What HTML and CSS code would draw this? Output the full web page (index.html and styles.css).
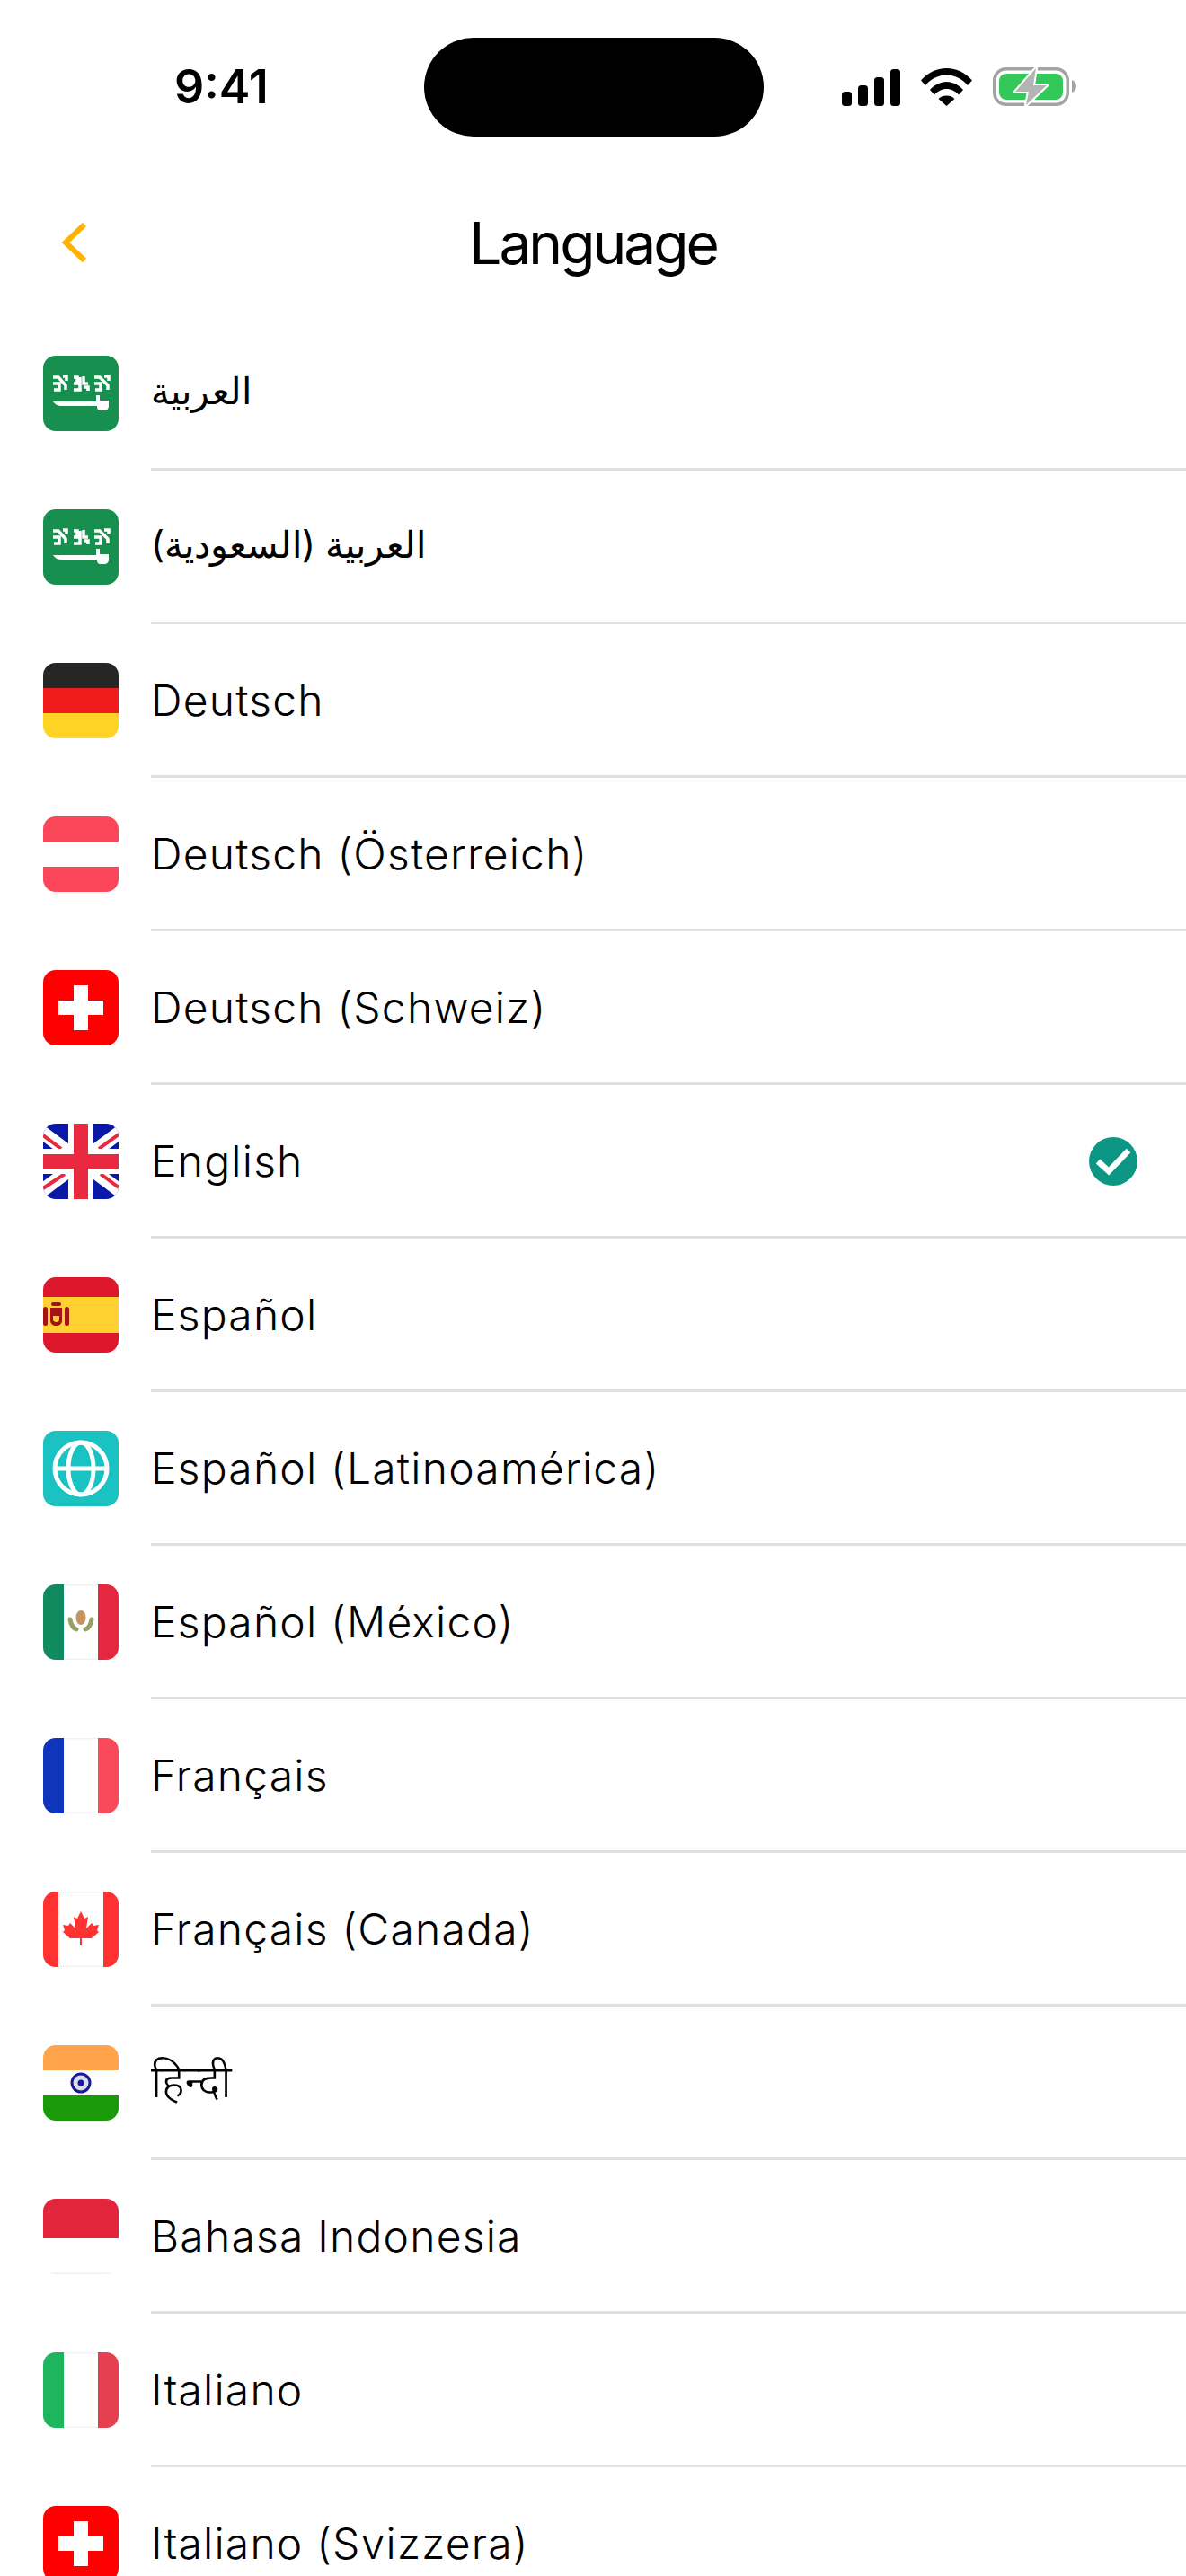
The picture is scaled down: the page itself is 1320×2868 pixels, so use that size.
FILE: index.html
```html
<!DOCTYPE html>
<html lang="en">

<head>
    <meta charset="UTF-8">
    <meta name="viewport" content="width=device-width, initial-scale=1.0">
    <title>Language</title>
    <link rel="stylesheet" href="styles.css">
</head>

<body>
    <div class="screen">
        <!-- Status bar -->
        <div class="status-bar">
            <span class="time">9:41</span>
            <div class="island"></div>
            <div class="status-icons">
                <svg class="icon-signal" width="65" height="41" viewBox="0 0 65 41">
                    <rect x="0" y="25" width="11" height="16" rx="3.5" />
                    <rect x="18" y="18" width="11" height="23" rx="3.5" />
                    <rect x="36" y="9" width="11" height="32" rx="3.5" />
                    <rect x="54" y="0" width="11" height="41" rx="3.5" />
                </svg>
                <svg class="icon-wifi" width="57" height="42" viewBox="0 0 57 42">
                    <path d="M0 13.5C7.500 4.800 17.500 0 28.500 0S49.500 4.800 57 13.500L52 19C45.500 11.500 37.500 7.500 28.500 7.500S11.500 11.500 5 19Z" />
                    <path d="M10 24C15 18.500 21.500 15 28.500 15S42 18.500 47 24L42 29.500C38.500 25.500 33.500 23 28.500 23S18.500 25.500 15 29.500Z" />
                    <path d="M19.500 34C22 31.500 25 30.500 28.500 30.500S35 31.500 37.500 34L28.500 42Z" />
                </svg>
                <svg class="icon-battery" width="93" height="43" viewBox="0 0 93 43">
                    <rect x="1.750" y="1.750" width="81.500" height="39.500" rx="13" fill="none" stroke="#a3a3a3" stroke-width="3.500" />
                    <path d="M88 14C91 15 93 18 93 21S91 27 88 28Z" fill="#a3a3a3" />
                    <rect x="7" y="7" width="71" height="29" rx="8" fill="#34c85a" />
                    <path d="M48 1L25 27H40L37 42L60 20H45Z" fill="#b4b4b4" stroke="#fff" stroke-width="4" stroke-linejoin="round" paint-order="stroke" />
                </svg>
            </div>
        </div>

        <!-- Nav bar -->
        <div class="nav-bar">
            <svg class="back" width="30" height="46" viewBox="0 0 30 46">
                <path d="M26 3L5 23L26 43" fill="none" stroke="#ffb300" stroke-width="6" />
            </svg>
            <h1>Language</h1>
        </div>

        <!-- Language list -->
        <ul class="lang-list">
            <li class="lang-row">
                <svg class="flag" viewBox="0 0 84 84">
                    <rect width="84" height="84" fill="#168f4f" />
                    <path d="M11 24H17L25 33V38M11 31H18V38H12M22 23H26V28M34 24H38V31H34M34 38H41V24M45 23V31H50M45 35H50V39M57 24H63L72 33V38M57 31H64V38H58M68 23H73V28" fill="none" stroke="#fff" stroke-width="3.500" />
                    <path d="M11 51H59V44H63V50H73V56C73 59 71 61 68 61H64C61 61 60 59 60 56H20C16 56 13 54 11 51Z" fill="#fff" />
                </svg>
                <span class="lang-name lang-name-ar">العربية</span>
            </li>
            <li class="lang-row">
                <svg class="flag" viewBox="0 0 84 84">
                    <rect width="84" height="84" fill="#168f4f" />
                    <path d="M11 24H17L25 33V38M11 31H18V38H12M22 23H26V28M34 24H38V31H34M34 38H41V24M45 23V31H50M45 35H50V39M57 24H63L72 33V38M57 31H64V38H58M68 23H73V28" fill="none" stroke="#fff" stroke-width="3.500" />
                    <path d="M11 51H59V44H63V50H73V56C73 59 71 61 68 61H64C61 61 60 59 60 56H20C16 56 13 54 11 51Z" fill="#fff" />
                </svg>
                <span class="lang-name lang-name-ar">العربية (السعودية)</span>
            </li>
            <li class="lang-row">
                <svg class="flag" viewBox="0 0 84 84">
                    <rect width="84" height="28" fill="#262626" />
                    <rect y="28" width="84" height="28" fill="#ee1c1c" />
                    <rect y="56" width="84" height="28" fill="#ffd324" />
                </svg>
                <span class="lang-name">Deutsch</span>
            </li>
            <li class="lang-row">
                <svg class="flag" viewBox="0 0 84 84">
                    <rect width="84" height="84" fill="#fff" />
                    <rect width="84" height="28" fill="#fb4759" />
                    <rect y="56" width="84" height="28" fill="#fb4759" />
                </svg>
                <span class="lang-name">Deutsch (Österreich)</span>
            </li>
            <li class="lang-row">
                <svg class="flag" viewBox="0 0 84 84">
                    <rect width="84" height="84" fill="#ff0000" />
                    <path d="M34 17H50V34H67V50H50V67H34V50H17V34H34Z" fill="#fff" />
                </svg>
                <span class="lang-name">Deutsch (Schweiz)</span>
            </li>
            <li class="lang-row">
                <svg class="flag" viewBox="0 0 84 84">
                    <rect width="84" height="84" fill="#0a17a7" />
                    <path d="M-14 0L98 84M98 0L-14 84" stroke="#fff" stroke-width="15" />
                    <path d="M0 13L20 28M84 12L62 28M0 72L24 56M84 71L64 56" stroke="#e8293f" stroke-width="4" />
                    <rect x="28" width="28" height="84" fill="#fff" />
                    <rect y="28" width="84" height="28" fill="#fff" />
                    <rect x="34" width="16" height="84" fill="#e8293f" />
                    <rect y="34" width="84" height="16" fill="#e8293f" />
                </svg>
                <span class="lang-name">English</span>
                <svg class="check" width="54" height="54" viewBox="0 0 54 54">
                    <circle cx="27" cy="27" r="27" fill="#0c9684" />
                    <path d="M10 27L22 38L44 15" fill="none" stroke="#fff" stroke-width="6.500" />
                </svg>
            </li>
            <li class="lang-row">
                <svg class="flag" viewBox="0 0 84 84">
                    <rect width="84" height="84" fill="#dd172c" />
                    <rect y="22" width="84" height="40" fill="#ffd133" />
                    <rect x="0" y="33" width="5" height="21" rx="2.500" fill="#a41414" />
                    <rect x="24" y="33" width="5" height="21" rx="2.500" fill="#a41414" />
                    <rect x="9" y="28" width="11" height="4" rx="2" fill="#a41414" />
                    <path d="M8 34H21V48C21 52 18 54 14.500 54S8 52 8 48Z" fill="#a41414" />
                    <path d="M11 43H18V47C18 49 16 50 14.500 50S11 49 11 47Z" fill="#ffd133" />
                </svg>
                <span class="lang-name">Español</span>
            </li>
            <li class="lang-row">
                <svg class="flag" viewBox="0 0 84 84">
                    <rect width="84" height="84" fill="#1ac2c2" />
                    <g fill="none" stroke="#fff" stroke-width="5">
                        <circle cx="42" cy="42" r="29" />
                        <ellipse cx="42" cy="42" rx="14" ry="29" />
                        <path d="M13 42H71" />
                    </g>
                </svg>
                <span class="lang-name">Español (Latinoamérica)</span>
            </li>
            <li class="lang-row">
                <svg class="flag" viewBox="0 0 84 84">
                    <rect width="84" height="84" fill="#f2f2f2" />
                    <rect y="1.500" width="84" height="81" fill="#fff" />
                    <rect width="23" height="84" fill="#128a60" />
                    <rect x="61" width="23" height="84" fill="#e5283f" />
                    <ellipse cx="42" cy="37" rx="5.500" ry="8" fill="#c4945f" />
                    <path d="M30 39C31 45 34 49 37 50M54 39C53 45 50 49 47 50" fill="none" stroke="#94a164" stroke-width="5" stroke-linecap="round" />
                </svg>
                <span class="lang-name">Español (México)</span>
            </li>
            <li class="lang-row">
                <svg class="flag" viewBox="0 0 84 84">
                    <rect width="84" height="84" fill="#f2f2f2" />
                    <rect y="1.500" width="84" height="81" fill="#fff" />
                    <rect width="23" height="84" fill="#1035bb" />
                    <rect x="61" width="23" height="84" fill="#f94a5c" />
                </svg>
                <span class="lang-name">Français</span>
            </li>
            <li class="lang-row">
                <svg class="flag" viewBox="0 0 84 84">
                    <rect width="84" height="84" fill="#f2f2f2" />
                    <rect y="1.500" width="84" height="81" fill="#fff" />
                    <rect width="17" height="84" fill="#ff3131" />
                    <rect x="67" width="17" height="84" fill="#ff3131" />
                    <path d="M42 22L46 30L50 28L48 41L54 35L56 38L62 37L60 43L62 45L54 52H43V60H41V52H30L22 45L24 43L22 37L28 38L30 35L36 41L34 28L38 30Z" fill="#ff3131" />
                </svg>
                <span class="lang-name">Français (Canada)</span>
            </li>
            <li class="lang-row">
                <svg class="flag" viewBox="0 0 84 84">
                    <rect width="84" height="84" fill="#fff" />
                    <rect width="84" height="28" fill="#ffa44a" />
                    <rect y="56" width="84" height="28" fill="#1a9a09" />
                    <circle cx="42" cy="42" r="10" fill="#dcdcf0" stroke="#181a93" stroke-width="3" />
                    <circle cx="42" cy="42" r="3.500" fill="#181a93" />
                </svg>
                <span class="lang-name lang-name-hi">हिन्दी</span>
            </li>
            <li class="lang-row">
                <svg class="flag" viewBox="0 0 84 84">
                    <rect width="84" height="84" fill="#fff" />
                    <rect width="84" height="44" fill="#e3253b" />
                    <rect x="6" y="82.500" width="72" height="1.500" fill="#f0f0f0" />
                </svg>
                <span class="lang-name">Bahasa Indonesia</span>
            </li>
            <li class="lang-row">
                <svg class="flag" viewBox="0 0 84 84">
                    <rect width="84" height="84" fill="#f2f2f2" />
                    <rect y="1.500" width="84" height="81" fill="#fff" />
                    <rect width="23" height="84" fill="#1db65f" />
                    <rect x="61" width="23" height="84" fill="#e53f50" />
                </svg>
                <span class="lang-name">Italiano</span>
            </li>
            <li class="lang-row">
                <svg class="flag" viewBox="0 0 84 84">
                    <rect width="84" height="84" fill="#ff0000" />
                    <path d="M34 17H50V34H67V50H50V67H34V50H17V34H34Z" fill="#fff" />
                </svg>
                <span class="lang-name">Italiano (Svizzera)</span>
            </li>
        </ul>
    </div>
</body>

</html>
```

FILE: styles.css
```css
/* Page frame */
html,
body {
    margin: 0;
    padding: 0;
    background-color: #ffffff;
}

.screen {
    width: 1320px;
    height: 2868px;
    overflow: hidden;
    font-family: Inter, "Noto Sans", sans-serif;
    color: #000;
}

/* Status bar */
.status-bar {
    height: 194px;
    position: relative;
}

.time {
    position: absolute;
    left: 194px;
    top: 72px;
    font-size: 52px;
    line-height: 50px;
    font-weight: 600;
}

.island {
    position: absolute;
    left: 472px;
    top: 42px;
    width: 378px;
    height: 110px;
    border-radius: 55px;
    background-color: #000;
}

.status-icons {
    position: absolute;
    left: 937px;
    top: 75px;
    display: flex;
    align-items: flex-end;
}

.icon-wifi {
    margin-left: 23px;
}

.icon-battery {
    margin-left: 23px;
}

/* Nav bar */
.nav-bar {
    height: 159px;
    position: relative;
    display: flex;
    align-items: center;
    justify-content: center;
}

.nav-bar h1 {
    margin: 0 0 5px 0;
    font-size: 64px;
    font-weight: 400;
    line-height: 80px;
    letter-spacing: -3px;
}

.back {
    position: absolute;
    left: 68px;
    top: 53px;
}

/* List */
.lang-list {
    list-style: none;
    margin: 0;
    padding: 0;
}

.lang-row {
    display: flex;
    align-items: center;
    box-sizing: border-box;
    height: 171px;
    padding: 0 0 1px 48px;
    position: relative;
}

.lang-row::after {
    content: "";
    position: absolute;
    left: 168px;
    right: 0;
    bottom: 0;
    height: 3px;
    background-color: #e0e0e0;
}

.flag {
    width: 84px;
    height: 84px;
    border-radius: 14px;
    flex-shrink: 0;
    margin-right: 36px;
}

.lang-name {
    font-size: 48px;
    font-weight: 300;
    letter-spacing: 1.2px;
    padding-bottom: 2px;
    flex: 1;
}

/* Arabic and Hindi sit tighter than the latin names */
.lang-name-ar {
    font-size: 41px;
    font-weight: 400;
    letter-spacing: 0;
    padding-bottom: 6px;
}

.lang-name-hi {
    font-size: 50px;
    letter-spacing: 0;
    padding-bottom: 6px;
}

.check {
    margin-right: 54px;
}
```
